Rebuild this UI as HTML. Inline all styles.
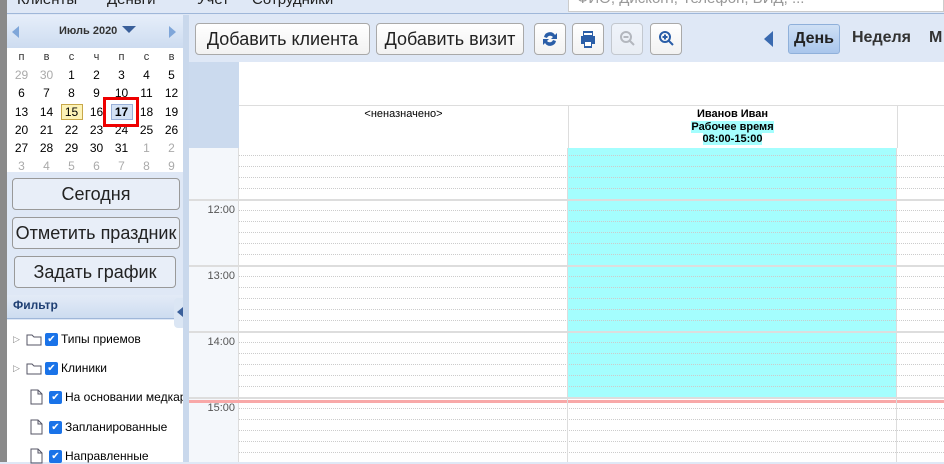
<!DOCTYPE html>
<html><head><meta charset="utf-8"><style>
*{box-sizing:border-box;margin:0;padding:0}
body{width:944px;height:462px;overflow:hidden;position:relative;background:#dfe8f6;font-family:"Liberation Sans",sans-serif;}
.abs{position:absolute}
.btn{position:absolute;border:1px solid #a9a9a9;border-radius:4px;background:linear-gradient(#fff,#f2f2f2);font-size:18px;color:#222;text-align:center}
.lbtn{position:absolute;border:1px solid #999;border-radius:4px;background:#e8eef8;font-size:18px;color:#222;text-align:center}
.cal td{width:25px;height:18.2px;text-align:center;font-size:12px;color:#000}
.g{color:#aaa!important}
.dot{position:absolute;left:239px;width:705px;border-top:1px dotted #ccc}
.hr{position:absolute;left:189px;width:755px;border-top:2px solid #ddd}
.tl{position:absolute;left:189px;width:46px;text-align:right;font-size:11px;color:#555}
.fi{position:absolute;font-size:12px;color:#000;display:flex;align-items:center;white-space:nowrap}
.fi svg,.fi span{flex-shrink:0}
.cb{display:inline-block;width:13px;height:13px;background:#1a73e8;border-radius:2px;color:#fff;font-size:10px;line-height:13px;text-align:center;margin-right:3px}
</style></head><body>
<div class="abs" style="left:0;top:0;width:7px;height:462px;background:#8a8a8a"></div>
<div class="abs" style="left:7px;top:0;width:937px;height:14px;background:#dfe8f6;border-bottom:1px solid #9fb7d9;overflow:hidden">
<span class="abs" style="left:10px;top:-9px;font-size:15px;color:#222">Клиенты</span>
<span class="abs" style="left:100px;top:-9px;font-size:15px;color:#222">Деньги</span>
<span class="abs" style="left:190px;top:-9px;font-size:15px;color:#222">Учет</span>
<span class="abs" style="left:245px;top:-9px;font-size:15px;color:#222">Сотрудники</span>
</div>
<div class="abs" style="left:568px;top:0;width:376px;height:12px;background:#fff;border:1px solid #ccc;border-top:none;overflow:hidden"><span class="abs" style="left:8px;top:-10px;font-size:15px;color:#999">ФИО, Дисконт, Телефон, ВИД, ...</span></div>
<div class="abs" style="left:7px;top:15px;width:176px;height:447px;background:#dfe8f6"></div>
<div class="abs" style="left:7px;top:15px;width:176px;height:33px;background:linear-gradient(#e6eefa,#cddcf0)"></div>
<div class="abs" style="left:12px;top:26px;width:0;height:0;border-top:6px solid transparent;border-bottom:6px solid transparent;border-right:7px solid #7fa6d9"></div>
<div class="abs" style="left:169px;top:26px;width:0;height:0;border-top:6px solid transparent;border-bottom:6px solid transparent;border-left:7px solid #7fa6d9"></div>
<div class="abs" style="left:59px;top:25px;font-size:11px;font-weight:bold;color:#333">Июль 2020</div>
<div class="abs" style="left:122px;top:26px;width:0;height:0;border-left:7px solid transparent;border-right:7px solid transparent;border-top:7px solid #3a5f9a"></div>
<div class="abs" style="left:7px;top:48px;width:176px;height:124px;background:#fff"></div>
<table class="cal abs" style="left:9px;top:48px;border-collapse:collapse">
<tr><td style="color:#333;font-size:11px">п</td><td style="color:#333;font-size:11px">в</td><td style="color:#333;font-size:11px">с</td><td style="color:#333;font-size:11px">ч</td><td style="color:#333;font-size:11px">п</td><td style="color:#333;font-size:11px">с</td><td style="color:#333;font-size:11px">в</td></tr>
<tr><td class="g">29</td><td class="g">30</td><td>1</td><td>2</td><td>3</td><td>4</td><td>5</td></tr>
<tr><td>6</td><td>7</td><td>8</td><td>9</td><td>10</td><td>11</td><td>12</td></tr>
<tr><td>13</td><td>14</td><td><span style="display:inline-block;width:22px;background:#fdf3b7;border:1px solid #c8a84a">15</span></td><td>16</td><td><span style="display:inline-block;width:22px;background:#d4e2f5;border:1px solid #9ab0d8;font-weight:bold">17</span></td><td>18</td><td>19</td></tr>
<tr><td>20</td><td>21</td><td>22</td><td>23</td><td>24</td><td>25</td><td>26</td></tr>
<tr><td>27</td><td>28</td><td>29</td><td>30</td><td>31</td><td class="g">1</td><td class="g">2</td></tr>
<tr><td class="g">3</td><td class="g">4</td><td class="g">5</td><td class="g">6</td><td class="g">7</td><td class="g">8</td><td class="g">9</td></tr>
</table>
<div class="abs" style="left:103px;top:97px;width:36px;height:30px;border:3px solid #e00"></div>
<div class="lbtn" style="left:12px;top:178px;width:168px;height:32px;line-height:30px">Сегодня</div>
<div class="lbtn" style="left:12px;top:217px;width:168px;height:32px;line-height:30px">Отметить праздник</div>
<div class="lbtn" style="left:14px;top:256px;width:162px;height:32px;line-height:30px">Задать график</div>
<div class="abs" style="left:7px;top:295px;width:176px;height:24px;background:linear-gradient(#e3ebf7,#cddcf0);border-bottom:1px solid #9fb7d9"></div>
<div class="abs" style="left:13px;top:298px;font-size:12px;font-weight:bold;color:#1f3f73">Фильтр</div>
<div class="abs" style="left:7px;top:320px;width:176px;height:142px;background:#fff"></div>
<div class="abs" style="left:174px;top:298px;width:12px;height:30px;background:#dbe6f4;border-radius:4px"></div>
<div class="abs" style="left:177px;top:307px;width:0;height:0;border-top:5px solid transparent;border-bottom:5px solid transparent;border-right:6px solid #3a5f9a"></div>
<div class="fi" style="left:13px;top:332px"><span style="color:#888;font-size:9px;width:13px">▷</span><svg width="16" height="13"><path d="M1 2h5l2 2h7v8H1z" fill="none" stroke="#556" stroke-width="1"/></svg><span style="width:3px"></span><span class="cb">✔</span>Типы приемов</div>
<div class="fi" style="left:13px;top:361px"><span style="color:#888;font-size:9px;width:13px">▷</span><svg width="16" height="13"><path d="M1 2h5l2 2h7v8H1z" fill="none" stroke="#556" stroke-width="1"/></svg><span style="width:3px"></span><span class="cb">✔</span>Клиники</div>
<div class="fi" style="left:30px;top:389px;width:153px;overflow:hidden"><svg width="14" height="16"><path d="M1 1h7l4 4v10H1z M8 1v4h4" fill="none" stroke="#556"/></svg><span style="width:5px"></span><span class="cb">✔</span>На основании медкарты</div>
<div class="fi" style="left:30px;top:419px"><svg width="14" height="16"><path d="M1 1h7l4 4v10H1z M8 1v4h4" fill="none" stroke="#556"/></svg><span style="width:5px"></span><span class="cb">✔</span>Запланированные</div>
<div class="fi" style="left:30px;top:448px"><svg width="14" height="16"><path d="M1 1h7l4 4v10H1z M8 1v4h4" fill="none" stroke="#556"/></svg><span style="width:5px"></span><span class="cb">✔</span>Направленные</div>
<div class="abs" style="left:183px;top:15px;width:6px;height:447px;background:#c9d8ec"></div>
<div class="btn" style="left:195px;top:23px;width:175px;height:32px;line-height:30px">Добавить клиента</div>
<div class="btn" style="left:376px;top:23px;width:148px;height:32px;line-height:30px">Добавить визит</div>
<div class="btn" style="left:534px;top:23px;width:32px;height:32px"><svg width="30" height="30"><path d="M9 13a6 6 0 0 1 11-2l2-2v6h-6l2-2a3.5 3.5 0 0 0-6 1z M21 17a6 6 0 0 1-11 2l-2 2v-6h6l-2 2a3.5 3.5 0 0 0 6-1z" fill="#2a5ea8"/></svg></div>
<div class="btn" style="left:572px;top:23px;width:32px;height:32px"><svg width="30" height="30"><path d="M10 7h10v5H10z M8 12h14v8h-3v4h-8v-4H8z" fill="#2a5ea8"/><rect x="12" y="18" width="6" height="4" fill="#fff"/><rect x="11" y="9" width="8" height="2" fill="#fff"/></svg></div>
<div class="btn" style="left:611px;top:23px;width:32px;height:32px;opacity:.5"><svg width="30" height="30"><circle cx="14" cy="13" r="5" fill="none" stroke="#888" stroke-width="2"/><path d="M11.5 13h5M18 17l4 4" stroke="#888" stroke-width="2"/></svg></div>
<div class="btn" style="left:650px;top:23px;width:32px;height:32px"><svg width="30" height="30"><circle cx="14" cy="13" r="5" fill="none" stroke="#2a5ea8" stroke-width="2"/><path d="M11.5 13h5M14 10.5v5M18 17l4 4" stroke="#2a5ea8" stroke-width="2"/></svg></div>
<div class="abs" style="left:764px;top:31px;width:0;height:0;border-top:8px solid transparent;border-bottom:8px solid transparent;border-right:9px solid #3a6ab0"></div>
<div class="abs" style="left:788px;top:24px;width:52px;height:30px;border:1px solid #8fb0da;border-radius:3px;background:linear-gradient(#cfe0f5,#a9c6ec);font-size:16px;font-weight:bold;color:#222;text-align:center;line-height:28px">День</div>
<div class="abs" style="left:852px;top:29px;font-size:16px;font-weight:bold;color:#333">Неделя</div>
<div class="abs" style="left:929px;top:29px;font-size:16px;font-weight:bold;color:#333">М</div>
<div class="abs" style="left:189px;top:62px;width:755px;height:400px;background:#fff"></div>
<div class="abs" style="left:189px;top:62px;width:50px;height:86px;background:#cbdaee"></div>
<div class="abs" style="left:189px;top:148px;width:50px;height:314px;background:#f4f7fb;border-right:1px solid #ddd"></div>
<div class="abs" style="left:239px;top:105px;width:705px;border-top:1px solid #ddd"></div>
<div class="abs" style="left:568px;top:105px;height:43px;border-left:1px solid #ddd"></div>
<div class="abs" style="left:897px;top:105px;height:43px;border-left:1px solid #ddd"></div>
<div class="abs" style="left:239px;top:108px;width:329px;text-align:center;font-size:11px;color:#000">&lt;неназначено&gt;</div>
<div class="abs" style="left:568px;top:108px;width:329px;text-align:center;font-size:11px;font-weight:bold;color:#000;line-height:12.5px">Иванов Иван<br><span style="background:#a4fefe">Рабочее время</span><br><span style="background:#a4fefe">08:00-15:00</span></div>
<div class="abs" style="left:567px;top:148px;width:329px;height:251px;background:#a4fefe"></div>
<div class="dot" style="top:155px"></div><div class="dot" style="top:166px"></div><div class="dot" style="top:177px"></div><div class="dot" style="top:188px"></div>
<div class="hr" style="top:199px"></div>
<div class="dot" style="top:210px"></div><div class="dot" style="top:221px"></div><div class="dot" style="top:232px"></div><div class="dot" style="top:243px"></div><div class="dot" style="top:254px"></div>
<div class="hr" style="top:265px"></div>
<div class="dot" style="top:276px"></div><div class="dot" style="top:287px"></div><div class="dot" style="top:298px"></div><div class="dot" style="top:309px"></div><div class="dot" style="top:320px"></div>
<div class="hr" style="top:331px"></div>
<div class="dot" style="top:342px"></div><div class="dot" style="top:353px"></div><div class="dot" style="top:364px"></div><div class="dot" style="top:375px"></div><div class="dot" style="top:386px"></div>
<div class="hr" style="top:397px"></div>
<div class="abs" style="left:189px;top:400px;width:755px;height:3px;background:#f8a8a8"></div>
<div class="dot" style="top:408px"></div><div class="dot" style="top:419px"></div><div class="dot" style="top:430px"></div><div class="dot" style="top:441px"></div><div class="dot" style="top:452px"></div>
<div class="abs" style="left:567px;top:148px;height:314px;border-left:1px solid #ddd"></div>
<div class="abs" style="left:896px;top:148px;height:314px;border-left:1px solid #ddd"></div>
<div class="tl" style="top:204px">12:00</div>
<div class="tl" style="top:270px">13:00</div>
<div class="tl" style="top:336px">14:00</div>
<div class="tl" style="top:402px">15:00</div>
</body></html>
